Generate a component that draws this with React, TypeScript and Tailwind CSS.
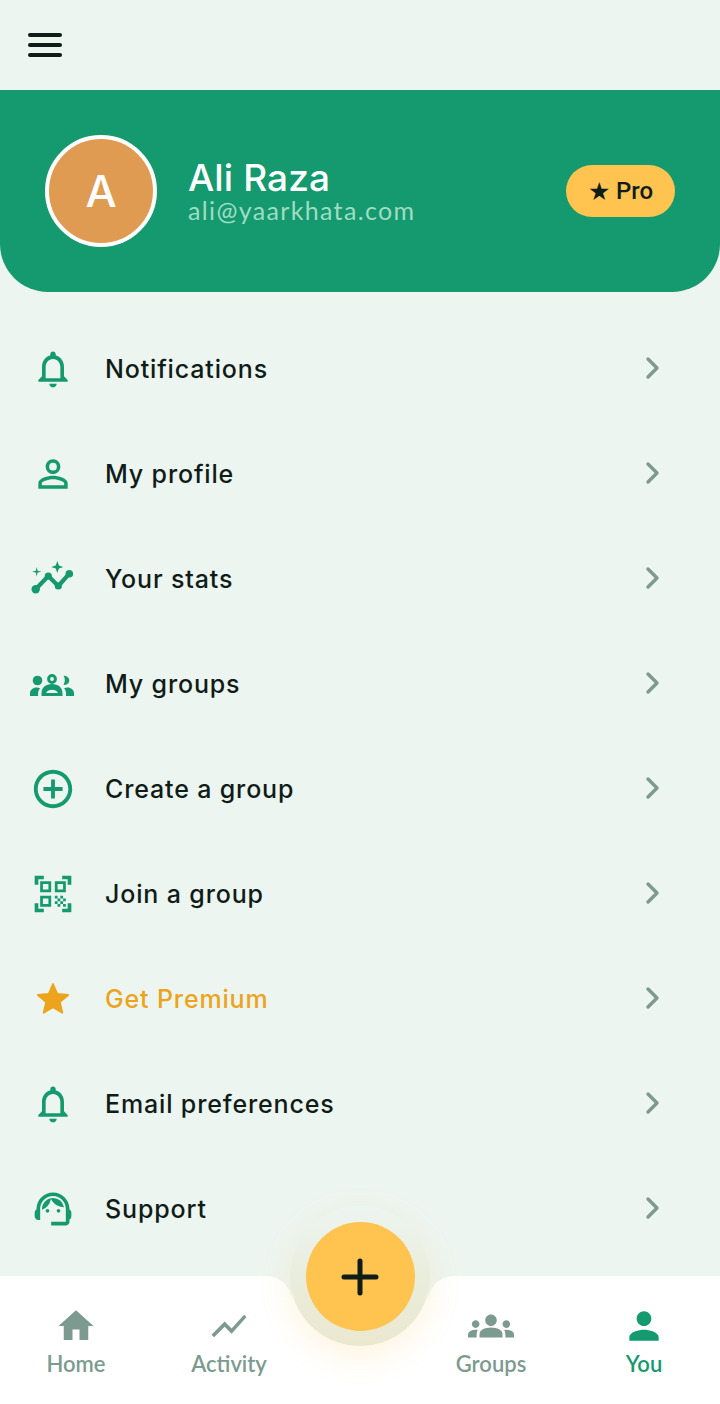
import type { ComponentType } from 'react';
import {
  MdNotificationsNone,
  MdPersonOutline,
  MdAddCircleOutline,
  MdQrCodeScanner,
  MdOutlineSupportAgent,
  MdHome,
  MdShowChart,
  MdGroups,
  MdPerson,
} from 'react-icons/md';

type IconProps = { size?: number };

function StatsIcon() {
  return (
    <svg width="55" height="45" viewBox="0 0 55 45" fill="currentColor">
      <path d="M10.7 33.3L23.3 20L33.3 30L44.3 17.7" fill="none" stroke="currentColor" strokeWidth="4.2" strokeLinecap="round" strokeLinejoin="round" />
      <circle cx="10.7" cy="33.3" r="4.2" />
      <circle cx="23.3" cy="20" r="3.6" />
      <circle cx="33.3" cy="30" r="3.6" />
      <circle cx="44.3" cy="17.7" r="3.8" />
      <path d="M32.3 5l1.6 4.4 4.400 1.600-4.400 1.600-1.600 4.400-1.600-4.400-4.400-1.600 4.400-1.600z" />
      <path d="M11.7 11l.9 3.800 3.800.9-3.800.9-.9 3.800-.9-3.800-3.800-.9 3.800-.9z" />
    </svg>
  );
}

function GroupsIcon() {
  return (
    <svg width="55" height="35" viewBox="0 0 55 35" fill="currentColor">
      <circle cx="27" cy="13" r="3.400" fill="none" stroke="currentColor" strokeWidth="3" />
      <path fillRule="evenodd" d="M27 18c6.500 0 10.500 3.600 10.500 9.500V30h-21v-2.500C16.500 21.600 20.500 18 27 18zM21 27h12c-1.200-2-3.300-3.200-6-3.200s-4.800 1.200-6 3.200z" />
      <circle cx="12.500" cy="14.500" r="4.800" />
      <path d="M5 30v-3c0-3 3-5.500 6.500-5.500 1.300 0 2.600.3 3.600.8-1.300 1.500-2 3.200-2 5.200V30z" />
      <path d="M38.500 9.800c2.500-.2 5.800 1.600 5.800 4.700 0 2.400-2 4.400-4.500 4.400-.7 0-.9-.2-1.400-.4 1-1.300 1.400-2.600 1.400-4.300 0-1.600-.5-3.100-1.300-4.400z" />
      <path d="M49 30v-3c0-3-3-5.500-6.500-5.500-1.200 0-2.400.2-3.400.7 1.300 1.500 1.900 3.300 1.900 5.300V30z" />
    </svg>
  );
}

function StarIcon() {
  return (
    <svg width="40" height="40" viewBox="0 0 24 24" fill="currentColor" stroke="currentColor" strokeWidth="1.1" strokeLinejoin="round">
      <path d="M12 16.900L17.600 20.300l-1.500-6.400 5-4.300-6.500-.6L12 3 9.400 9l-6.500.6 5 4.300-1.500 6.400z" />
    </svg>
  );
}

const menu: { label: string; icon: ComponentType<IconProps>; size: number; gold?: boolean }[] = [
  { label: 'Notifications', icon: MdNotificationsNone, size: 44 },
  { label: 'My profile', icon: MdPersonOutline, size: 44 },
  { label: 'Your stats', icon: StatsIcon, size: 44 },
  { label: 'My groups', icon: GroupsIcon, size: 46 },
  { label: 'Create a group', icon: MdAddCircleOutline, size: 46 },
  { label: 'Join a group', icon: MdQrCodeScanner, size: 44 },
  { label: 'Get Premium', icon: StarIcon, size: 40, gold: true },
  { label: 'Email preferences', icon: MdNotificationsNone, size: 44 },
  { label: 'Support', icon: MdOutlineSupportAgent, size: 44 },
];

function Tab({ label, icon: Icon, size, active }: { label: string; icon: ComponentType<IconProps>; size: number; active?: boolean }) {
  return (
    <div className={`flex w-[100px] flex-col items-center ${active ? 'text-[#149a6e]' : 'text-[#7d9a90]'}`}>
      <div className="flex h-[44px] items-center justify-center">
        <Icon size={size} />
      </div>
      <span className="mt-[3px] text-[22px] leading-[26px] font-semibold">{label}</span>
    </div>
  );
}

export default function App() {
  return (
    <div className="relative flex h-[1404px] w-[720px] flex-col overflow-hidden bg-[#edf5f0] font-['Lato',sans-serif]">
      {/* top bar */}
      <div className="flex h-[90px] shrink-0 items-center pl-[28px]">
        <div className="flex w-[34px] flex-col gap-[6px] pb-[1px]">
          <span className="h-[4px] rounded-full bg-[#101c18]" />
          <span className="h-[4px] rounded-full bg-[#101c18]" />
          <span className="h-[4px] rounded-full bg-[#101c18]" />
        </div>
      </div>

      {/* profile header */}
      <div className="flex h-[202px] shrink-0 items-center rounded-b-[48px] bg-[#149a6e] pr-[45px] pl-[45px]">
        <div className="flex h-[112px] w-[112px] items-center justify-center rounded-full border-4 border-white bg-[#e09b52] font-['Inter',sans-serif] text-[44px] font-medium text-white">
          A
        </div>
        <div className="ml-[31px] flex-1">
          <div className="font-['Inter',sans-serif] text-[37px] leading-[38px] font-medium tracking-[0.1px] text-white">Ali Raza</div>
          <div className="text-[25px] leading-[27px] tracking-[1.35px] text-[#9fdcc4]">ali@yaarkhata.com</div>
        </div>
        <div className="flex h-[52px] w-[109px] items-center justify-center gap-[6px] rounded-full bg-[#ffc34f] font-['Roboto',sans-serif] text-[24px] font-medium text-[#101c18]">
          <span className="text-[25px] leading-none">★</span>
          <span>Pro</span>
        </div>
      </div>

      {/* menu */}
      <div className="flex flex-col pt-[24px]">
        {menu.map(({ label, icon: Icon, size, gold }) => (
          <div key={label} className="flex h-[105px] items-center">
            <div className={`flex w-[105px] shrink-0 items-center justify-center ${gold ? 'text-[#eba41c]' : 'text-[#149a6e]'}`}>
              <Icon size={size} />
            </div>
            <span className={`flex-1 pt-[2px] font-['Inter',sans-serif] text-[25px] font-[450] tracking-[0.85px] ${gold ? 'text-[#eba41c]' : 'text-[#101c18]'}`}>
              {label}
            </span>
            <svg className="mr-[58px] mb-[2px] h-[24px] w-[18px] text-[#7d9a90]" viewBox="0 0 18 24" fill="none" stroke="currentColor" strokeWidth="3.4" strokeLinecap="round" strokeLinejoin="round">
              <path d="M4 3l9 9-9 9" />
            </svg>
          </div>
        ))}
      </div>

      {/* bottom nav */}
      <div className="absolute right-0 bottom-0 left-0 flex h-[128px]">
        <div className="flex w-[292px] justify-start rounded-tr-[26px] bg-white pt-[28px] pl-[26px]">
          <Tab label="Home" icon={MdHome} size={42} />
          <div className="ml-[53px]">
            <Tab label="Activity" icon={MdShowChart} size={42} />
          </div>
        </div>
        <div className="flex-1 bg-white" />
        <div className="flex w-[292px] justify-start rounded-tl-[26px] bg-white pt-[28px] pl-[13px]">
          <Tab label="Groups" icon={MdGroups} size={46} />
          <div className="ml-[53px]">
            <Tab label="You" icon={MdPerson} size={44} active />
          </div>
        </div>
      </div>

      {/* halo behind the add button */}
      <div className="absolute top-[1206px] left-[290px] h-[140px] w-[140px] rounded-full bg-[linear-gradient(#edf5f0_0%,#e9eddc_50%,#ebe8d0_100%)] shadow-[0_10px_30px_rgba(255,195,79,0.18)]" />

      {/* add button */}
      <div className="absolute top-[1222px] left-[305.500px] flex h-[109px] w-[109px] items-center justify-center rounded-full bg-[#ffc34f]">
        <svg className="h-[38px] w-[38px]" viewBox="0 0 38 38" fill="none" stroke="#101c18" strokeWidth="5" strokeLinecap="round">
          <path d="M19 3v32M3 19h32" />
        </svg>
      </div>
    </div>
  );
}
